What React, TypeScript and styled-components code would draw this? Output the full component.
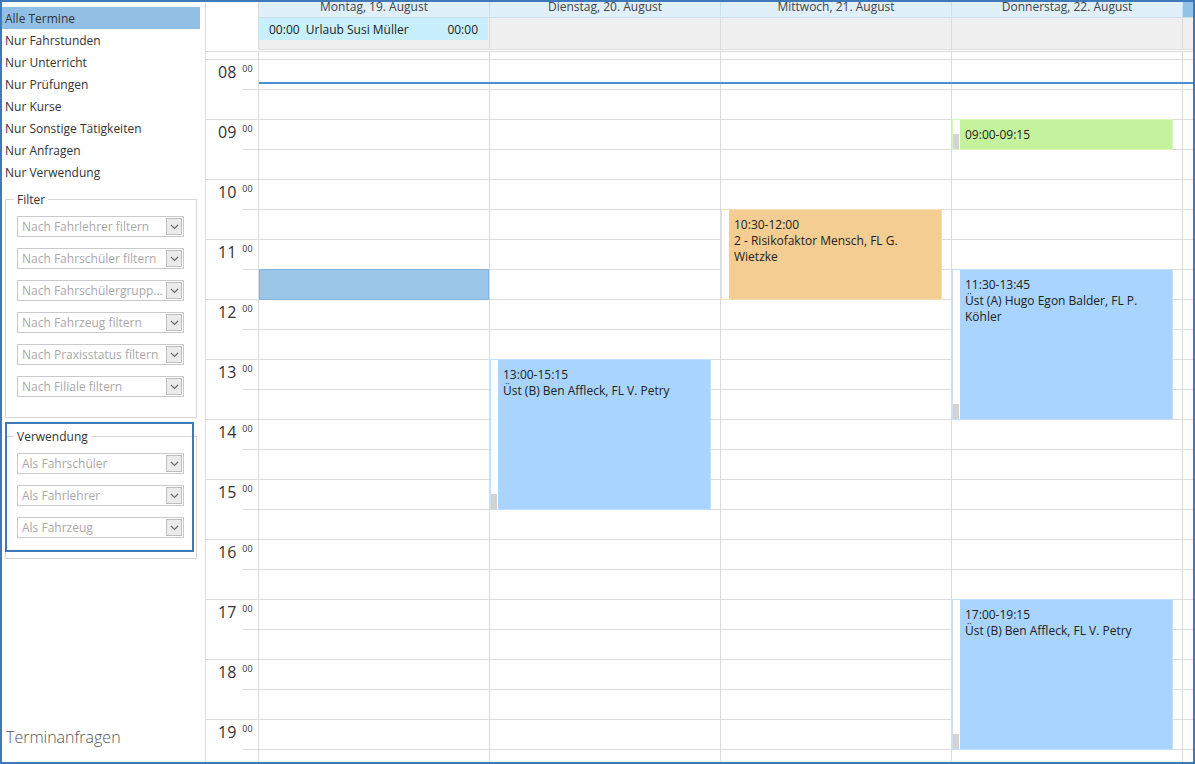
import React from "react";
import styled, { createGlobalStyle } from "styled-components";

const GlobalStyle = createGlobalStyle`
  html, body {
    margin: 0;
    padding: 0;
    background: #ffffff;
  }
  body {
    font-family: "Open Sans", "Noto Sans", sans-serif;
    font-size: 12px;
    color: #333333;
  }
  * {
    box-sizing: border-box;
  }
`;

const LINE = "#dcdcdc";
const SLOT = 30;

const menuItems = [
  "Alle Termine",
  "Nur Fahrstunden",
  "Nur Unterricht",
  "Nur Prüfungen",
  "Nur Kurse",
  "Nur Sonstige Tätigkeiten",
  "Nur Anfragen",
  "Nur Verwendung",
];

const filterCombos = [
  "Nach Fahrlehrer filtern",
  "Nach Fahrschüler filtern",
  "Nach Fahrschülergrupp...",
  "Nach Fahrzeug filtern",
  "Nach Praxisstatus filtern",
  "Nach Filiale filtern",
];

const usageCombos = ["Als Fahrschüler", "Als Fahrlehrer", "Als Fahrzeug"];

const days = [
  "Montag, 19. August",
  "Dienstag, 20. August",
  "Mittwoch, 21. August",
  "Donnerstag, 22. August",
];

const hours = ["08", "09", "10", "11", "12", "13", "14", "15", "16", "17", "18", "19"];

type Kind = "blue" | "orange" | "green" | "selection";

type CalEvent = {
  day: number;
  start: number; // slot index from 08:00
  slots: number;
  kind: Kind;
  lines: string[];
  grip?: boolean;
};

const events: CalEvent[] = [
  { day: 0, start: 7, slots: 1, kind: "selection", lines: [] },
  {
    day: 1,
    start: 10,
    slots: 5,
    kind: "blue",
    lines: ["13:00-15:15", "Üst (B) Ben Affleck, FL V. Petry"],
    grip: true,
  },
  {
    day: 2,
    start: 5,
    slots: 3,
    kind: "orange",
    lines: ["10:30-12:00", "2 - Risikofaktor Mensch, FL G. Wietzke"],
  },
  { day: 3, start: 2, slots: 1, kind: "green", lines: ["09:00-09:15"], grip: true },
  {
    day: 3,
    start: 7,
    slots: 5,
    kind: "blue",
    lines: ["11:30-13:45", "Üst (A) Hugo Egon Balder, FL P. Köhler"],
    grip: true,
  },
  {
    day: 3,
    start: 18,
    slots: 5,
    kind: "blue",
    lines: ["17:00-19:15", "Üst (B) Ben Affleck, FL V. Petry"],
    grip: true,
  },
];

const palette: Record<Kind, { bg: string; border: string }> = {
  blue: { bg: "#a8d4fd", border: "#c3e1fd" },
  orange: { bg: "#f4cd93", border: "#f7dcb4" },
  green: { bg: "#c5f39d", border: "#d8f7bd" },
  selection: { bg: "#9ac5e7", border: "#86b3da" },
};

const Frame = styled.div`
  width: 1195px;
  height: 764px;
  border: 2px solid #4079b8;
  display: flex;
  overflow: hidden;
  background: #ffffff;
`;

/* ---------- sidebar ---------- */

const Sidebar = styled.aside`
  width: 204px;
  flex: none;
  border-right: 1px solid ${LINE};
  display: flex;
  flex-direction: column;
`;

const MenuList = styled.ul`
  list-style: none;
  margin: 0;
  padding: 5px 0 0 0;
  width: 198px;
`;

const MenuItem = styled.li<{ $active?: boolean }>`
  height: 22px;
  line-height: 21px;
  padding: 1px 0 0 3px;
  white-space: nowrap;
  color: #333333;
  background: ${(p) => (p.$active ? "#91c0e4" : "transparent")};
`;

const GroupBox = styled.fieldset<{ $spaceTop: number }>`
  margin: ${(p) => p.$spaceTop}px 8px 0 3px;
  padding: 0 12px 20px 11px;
  width: 192px;
  border: 1px solid #d6d6d6;
  min-width: 0;
`;

const Legend = styled.legend`
  margin-left: -3px;
  padding: 1px 3px 0;
  line-height: 15px;
  height: 16px;
  color: #333333;
`;

const ComboStack = styled.div`
  padding-top: 9px;
  display: flex;
  flex-direction: column;
  gap: 11px;
`;

const Combo = styled.div`
  width: 167px;
  height: 21px;
  border: 1px solid #cacaca;
  display: flex;
  align-items: center;
  justify-content: space-between;
  padding: 0 1px 0 4px;
  background: #ffffff;
`;

const ComboText = styled.span`
  color: #a9a9a9;
  white-space: nowrap;
  overflow: hidden;
  line-height: 19px;
`;

const ComboButton = styled.span`
  width: 16px;
  height: 17px;
  flex: none;
  border: 1px solid #bdbdbd;
  background: #ebebeb;
  display: flex;
  align-items: center;
  justify-content: center;
`;

const FocusWrap = styled.div`
  position: relative;
`;

const FocusRing = styled.div`
  position: absolute;
  top: 4px;
  left: 3px;
  width: 189px;
  height: 130px;
  border: 2px solid #3f78b6;
  pointer-events: none;
`;

const Footer = styled.div`
  margin-top: auto;
  padding: 0 0 14px 4px;
  font-size: 16px;
  line-height: 22px;
  color: #555555;
  font-weight: 300;
`;

const Chevron = () => (
  <svg width="9" height="6" viewBox="0 0 9 6">
    <path d="M1 1 L4.5 4.5 L8 1" fill="none" stroke="#6b6b6b" strokeWidth="1.2" />
  </svg>
);

const ComboBox = ({ text }: { text: string }) => (
  <Combo>
    <ComboText>{text}</ComboText>
    <ComboButton>
      <Chevron />
    </ComboButton>
  </Combo>
);

/* ---------- calendar ---------- */

const COLS = "53px repeat(4, 231px) 10px";

const Calendar = styled.section`
  flex: 1;
  display: flex;
  flex-direction: column;
  min-width: 0;
`;

const HeaderGrid = styled.div`
  display: grid;
  grid-template-columns: ${COLS};
  grid-template-rows: 16px 32px;
`;

const Corner = styled.div`
  grid-row: 1 / span 2;
  border-right: 1px solid ${LINE};
  background: #ffffff;
`;

const DayName = styled.div`
  background: #dff0fa;
  border-bottom: 1px solid #cfdde6;
  border-right: 1px solid #c9e2f1;
  text-align: center;
  line-height: 10px;
  overflow: hidden;
  color: #444444;
  white-space: nowrap;
`;

const GutterHead = styled.div`
  background: #93c3e6;
  border-bottom: 1px solid #cfdde6;
`;

const AllDayCell = styled.div`
  background: #efefef;
  border-right: 1px solid ${LINE};
  border-bottom: 1px solid ${LINE};
  padding-right: 1px;
`;

const GutterAllDay = styled.div`
  background: #efefef;
  border-bottom: 1px solid ${LINE};
`;

const AllDayEvent = styled.div`
  height: 22px;
  background: #c7f0fc;
  display: flex;
  justify-content: space-between;
  align-items: center;
  padding: 1px 10px 0;
  color: #222222;
  white-space: nowrap;
`;

const Strip = styled.div`
  margin-top: 1px;
  height: 9px;
  display: grid;
  grid-template-columns: ${COLS};
  border-top: 1px solid ${LINE};
  border-bottom: 1px solid ${LINE};
`;

const StripCell = styled.div<{ $last?: boolean }>`
  border-right: ${(p) => (p.$last ? "none" : `1px solid ${LINE}`)};
`;

const Body = styled.div`
  position: relative;
  flex: 1;
  overflow: hidden;
`;

const BodyGrid = styled.div`
  display: grid;
  grid-template-columns: ${COLS};
  align-items: start;
`;

const TimeColumn = styled.div`
  border-right: 1px solid ${LINE};
`;

const HourBlock = styled.div`
  height: ${SLOT * 2}px;
  border-bottom: 1px solid ${LINE};
  display: flex;
  flex-direction: column;
`;

const HalfTop = styled.div`
  height: ${SLOT - 1}px;
  display: flex;
  align-items: flex-start;
  padding: 2px 0 0 12px;
  gap: 6px;
`;

const HalfLine = styled.div`
  height: 1px;
  margin-left: 36px;
  background: ${LINE};
`;

const HourBig = styled.span`
  font-size: 16px;
  line-height: 20px;
  color: #333333;
`;

const HourSmall = styled.span`
  font-size: 9px;
  line-height: 12px;
  margin-top: 1px;
  color: #333333;
`;

const DayColumn = styled.div<{ $last?: boolean }>`
  position: relative;
  border-right: ${(p) => (p.$last ? "none" : `1px solid ${LINE}`)};
`;

const Slot = styled.div`
  height: ${SLOT}px;
  border-bottom: 1px solid ${LINE};
`;

const EventBox = styled.div<{ $kind: Kind; $start: number; $slots: number; $full?: boolean }>`
  position: absolute;
  left: 0;
  top: ${(p) => p.$start * SLOT - 1}px;
  height: ${(p) => p.$slots * SLOT + 1}px;
  width: ${(p) => (p.$full ? 230 : 221)}px;
  border: 1px solid ${(p) => palette[p.$kind].border};
  background: ${(p) => palette[p.$kind].bg};
  display: flex;
`;

const EventStrip = styled.div<{ $grip?: boolean }>`
  width: 7px;
  flex: none;
  background: #ffffff;
  display: flex;
  flex-direction: column;
  justify-content: flex-end;
  padding-right: 1px;

  &::after {
    content: "";
    display: ${(p) => (p.$grip ? "block" : "none")};
    height: 15px;
    background: #d3d3d3;
  }
`;

const EventText = styled.div`
  padding: 7px 6px 0 5px;
  line-height: 16px;
  color: #222222;
`;

const NowLine = styled.div`
  position: absolute;
  top: 22px;
  left: 53px;
  right: 0;
  height: 2px;
  background: #4a8fd6;
`;

const renderEvent = (ev: CalEvent, i: number) => (
  <EventBox
    key={i}
    $kind={ev.kind}
    $start={ev.start}
    $slots={ev.slots}
    $full={ev.kind === "selection"}
  >
    {ev.kind !== "selection" && <EventStrip $grip={ev.grip} />}
    {ev.lines.length > 0 && (
      <EventText>
        {ev.lines.map((l) => (
          <div key={l}>{l}</div>
        ))}
      </EventText>
    )}
  </EventBox>
);

const slotCount = hours.length * 2;

export default function App() {
  return (
    <>
      <GlobalStyle />
      <Frame>
        <Sidebar>
          <MenuList>
            {menuItems.map((m, i) => (
              <MenuItem key={m} $active={i === 0}>
                {m}
              </MenuItem>
            ))}
          </MenuList>

          <GroupBox $spaceTop={8}>
            <Legend>Filter</Legend>
            <ComboStack>
              {filterCombos.map((c) => (
                <ComboBox key={c} text={c} />
              ))}
            </ComboStack>
          </GroupBox>

          <FocusWrap>
            <GroupBox $spaceTop={10}>
              <Legend>Verwendung</Legend>
              <ComboStack>
                {usageCombos.map((c) => (
                  <ComboBox key={c} text={c} />
                ))}
              </ComboStack>
            </GroupBox>
            <FocusRing />
          </FocusWrap>

          <Footer>Terminanfragen</Footer>
        </Sidebar>

        <Calendar>
          <HeaderGrid>
            <Corner />
            {days.map((d) => (
              <DayName key={d}>{d}</DayName>
            ))}
            <GutterHead />
            {days.map((d, i) => (
              <AllDayCell key={d}>
                {i === 0 && (
                  <AllDayEvent>
                    <span>00:00&nbsp; Urlaub Susi Müller</span>
                    <span>00:00</span>
                  </AllDayEvent>
                )}
              </AllDayCell>
            ))}
            <GutterAllDay />
          </HeaderGrid>

          <Strip>
            <StripCell />
            {days.map((d) => (
              <StripCell key={d} />
            ))}
            <StripCell $last />
          </Strip>

          <Body>
            <BodyGrid>
              <TimeColumn>
                {hours.map((h) => (
                  <HourBlock key={h}>
                    <HalfTop>
                      <HourBig>{h}</HourBig>
                      <HourSmall>00</HourSmall>
                    </HalfTop>
                    <HalfLine />
                  </HourBlock>
                ))}
              </TimeColumn>
              {days.map((d, di) => (
                <DayColumn key={d}>
                  {Array.from({ length: slotCount }, (_, s) => (
                    <Slot key={s} />
                  ))}
                  {events.filter((e) => e.day === di).map(renderEvent)}
                </DayColumn>
              ))}
              <DayColumn $last>
                {Array.from({ length: slotCount }, (_, s) => (
                  <Slot key={s} />
                ))}
              </DayColumn>
            </BodyGrid>
            <NowLine />
          </Body>
        </Calendar>
      </Frame>
    </>
  );
}
